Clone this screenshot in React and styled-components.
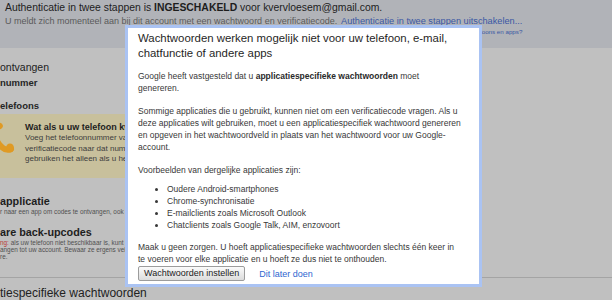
import React from "react";
import styled, { createGlobalStyle } from "styled-components";

const GlobalStyle = createGlobalStyle`
  html, body {
    margin: 0;
    padding: 0;
  }
  body {
    width: 612px;
    height: 300px;
    overflow: hidden;
    background: #c0c0c0;
    font-family: "Liberation Sans", Arial, sans-serif;
  }
`;

const Page = styled.div`
  position: relative;
  width: 612px;
  height: 300px;
  overflow: hidden;
  background: #c0c0c0;
`;

const Header = styled.header`
  height: 48px;
  box-sizing: border-box;
  background: #b1b3b8;
  padding: 1px 0 0 5px;
`;

const StatusLine = styled.div`
  font-size: 10.4px;
  line-height: 13px;
  color: #1d1d1d;
  white-space: nowrap;
`;

const InfoRow = styled.div`
  display: flex;
  align-items: flex-start;
  margin-top: 1px;
`;

const InfoText = styled.div`
  font-size: 9px;
  line-height: 12px;
  color: #5a5a5a;
  white-space: nowrap;
  width: 336px;
`;

const LinkColumn = styled.div`
  display: flex;
  flex-direction: column;
  align-items: flex-end;
`;

const Link = styled.a`
  color: ${(p) => (p.$light ? "#2f66d0" : "#3a57a4")};
  font-size: ${(p) => p.$size || 9.2}px;
  line-height: ${(p) => (p.$size ? p.$size + 3 : 12)}px;
  text-decoration: none;
  white-space: nowrap;
  cursor: pointer;
`;

const Main = styled.section`
  height: 229px;
  box-sizing: border-box;
  padding-top: 12px;
  color: #222;
`;

const SectionTitle = styled.div`
  font-size: ${(p) => p.$size || 10.5}px;
  line-height: 14px;
  color: #222;
  white-space: nowrap;
  margin-top: ${(p) => p.$top || 0}px;
`;

const SubHead = styled.div`
  font-size: 9.5px;
  font-weight: bold;
  line-height: 12px;
  color: #262626;
  margin-top: ${(p) => p.$top || 0}px;
  white-space: nowrap;
`;

const Notice = styled.div`
  margin-top: 2px;
  width: 420px;
  height: 64px;
  box-sizing: border-box;
  background: #c8c09c;
  display: flex;
  gap: 10px;
  padding-top: 7px;
  overflow: hidden;
`;

const NoticeIcon = styled.svg`
  flex: none;
  margin-left: -9px;
  margin-top: 1px;
`;

const NoticeBody = styled.div`
  white-space: nowrap;
`;

const NoticeTitle = styled.div`
  font-size: 9px;
  font-weight: bold;
  line-height: 12px;
  color: #1e1e1e;
`;

const NoticeText = styled.div`
  font-size: 8px;
  line-height: 10.5px;
  color: #3d3d3d;
`;

const Option = styled.div`
  margin-top: ${(p) => p.$top}px;
`;

const OptionTitle = styled.div`
  font-size: 10.8px;
  font-weight: bold;
  line-height: 14px;
  color: #1e1e1e;
  white-space: nowrap;
`;

const OptionText = styled.div`
  font-size: 6.4px;
  line-height: ${(p) => p.$lh || 8}px;
  color: #505050;
  white-space: nowrap;
`;

const Warn = styled.span`
  color: #b83a36;
`;

const Divider = styled.hr`
  margin: 0;
  border: 0;
  border-top: 1px solid #a4a4a4;
`;

const Dialog = styled.div`
  position: absolute;
  left: 125px;
  top: 25px;
  width: 357px;
  height: 262px;
  box-sizing: border-box;
  border: 3px solid #aac3f3;
  background: #fff;
  padding: 3px 9px 0 10px;
  color: #383838;
  white-space: nowrap;
`;

const DialogTitle = styled.h2`
  margin: 0 0 10px;
  font-size: 11.4px;
  font-weight: normal;
  line-height: 14.5px;
  color: #1f1f1f;
`;

const Para = styled.p`
  margin: 0 0 ${(p) => p.$gap ?? 11}px;
  font-size: 8.5px;
  line-height: 12px;
  b {
    color: #2a2a2a;
  }
`;

const List = styled.ul`
  margin: 0 0 10px;
  padding-left: 29px;
  font-size: 8.5px;
  line-height: 12px;
  list-style: disc;
`;

const Actions = styled.div`
  display: flex;
  align-items: center;
  gap: 14px;
`;

const Button = styled.button`
  height: 15px;
  padding: 0 5px;
  font-family: inherit;
  font-size: 9px;
  line-height: 13px;
  color: #222;
  background: linear-gradient(#fbfbfb, #dcdcdc);
  border: 1px solid #9c9c9c;
  border-radius: 2px;
  cursor: pointer;
`;

const PhoneIcon = () => (
  <NoticeIcon width="24" height="32" viewBox="0 0 24 32">
    <path
      d="M6 3 C 2 6, 2 14, 8 22 C 12 27, 16 29, 20 27"
      fill="none"
      stroke="#df9a24"
      strokeWidth="6"
      strokeLinecap="round"
    />
    <ellipse cx="7" cy="4" rx="5" ry="3.5" fill="#df9a24" />
    <ellipse cx="19" cy="26" rx="4" ry="4.5" fill="#df9a24" />
  </NoticeIcon>
);

export default function App() {
  return (
    <>
      <GlobalStyle />
      <Page>
        <Header>
          <StatusLine>
            Authenticatie in twee stappen is <b>INGESCHAKELD</b> voor kvervloesem@gmail.com.
          </StatusLine>
          <InfoRow>
            <InfoText>
              U meldt zich momenteel aan bij dit account met een wachtwoord en verificatiecode.
            </InfoText>
            <LinkColumn>
              <Link>Authenticatie in twee stappen uitschakelen...</Link>
              <Link $size={6.2}>Problemen met telefoons en apps?</Link>
            </LinkColumn>
          </InfoRow>
        </Header>

        <Main>
          <SectionTitle>ontvangen</SectionTitle>
          <SubHead $top={3}>nummer</SubHead>
          <SubHead $top={11}>elefoons</SubHead>
          <Notice>
            <PhoneIcon />
            <NoticeBody>
              <NoticeTitle>Wat als u uw telefoon kwijtraakt?</NoticeTitle>
              <NoticeText>
                Voeg het telefoonnummer van een back-uptelefoon toe. We sturen een
                <br />
                verificatiecode naar dat nummer als uw telefoon zoek is. We
                <br />
                gebruiken het alleen als u het nodig heeft.
              </NoticeText>
            </NoticeBody>
          </Notice>
          <Option $top={16}>
            <OptionTitle>applicatie</OptionTitle>
            <OptionText>r naar een app om codes te ontvangen, ook zonder verbinding.</OptionText>
          </Option>
          <Option $top={9}>
            <OptionTitle>are back-upcodes</OptionTitle>
            <OptionText $lh={7}>
              <Warn>ng:</Warn> als uw telefoon niet beschikbaar is, kunt u hiermee
              <br />
              angen tot uw account. Bewaar ze ergens veilig.
              <br />
              re.
            </OptionText>
          </Option>
        </Main>
        <Divider />
        <SectionTitle $size={12} $top={8}>
          tiespecifieke wachtwoorden
        </SectionTitle>

        <Dialog role="dialog">
          <DialogTitle>
            Wachtwoorden werken mogelijk niet voor uw telefoon, e-mail,
            <br />
            chatfunctie of andere apps
          </DialogTitle>
          <Para>
            Google heeft vastgesteld dat u <b>applicatiespecifieke wachtwoorden</b> moet
            <br />
            genereren.
          </Para>
          <Para>
            Sommige applicaties die u gebruikt, kunnen niet om een verificatiecode vragen. Als u
            <br />
            deze applicaties wilt gebruiken, moet u een applicatiespecifiek wachtwoord genereren
            <br />
            en opgeven in het wachtwoordveld in plaats van het wachtwoord voor uw Google-
            <br />
            account.
          </Para>
          <Para $gap={7}>Voorbeelden van dergelijke applicaties zijn:</Para>
          <List>
            <li>Oudere Android-smartphones</li>
            <li>Chrome-synchronisatie</li>
            <li>E-mailclients zoals Microsoft Outlook</li>
            <li>Chatclients zoals Google Talk, AIM, enzovoort</li>
          </List>
          <Para $gap={1}>
            Maak u geen zorgen. U hoeft applicatiespecifieke wachtwoorden slechts één keer in
            <br />
            te voeren voor elke applicatie en u hoeft ze dus niet te onthouden.
          </Para>
          <Actions>
            <Button>Wachtwoorden instellen</Button>
            <Link $light $size={9}>Dit later doen</Link>
          </Actions>
        </Dialog>
      </Page>
    </>
  );
}
